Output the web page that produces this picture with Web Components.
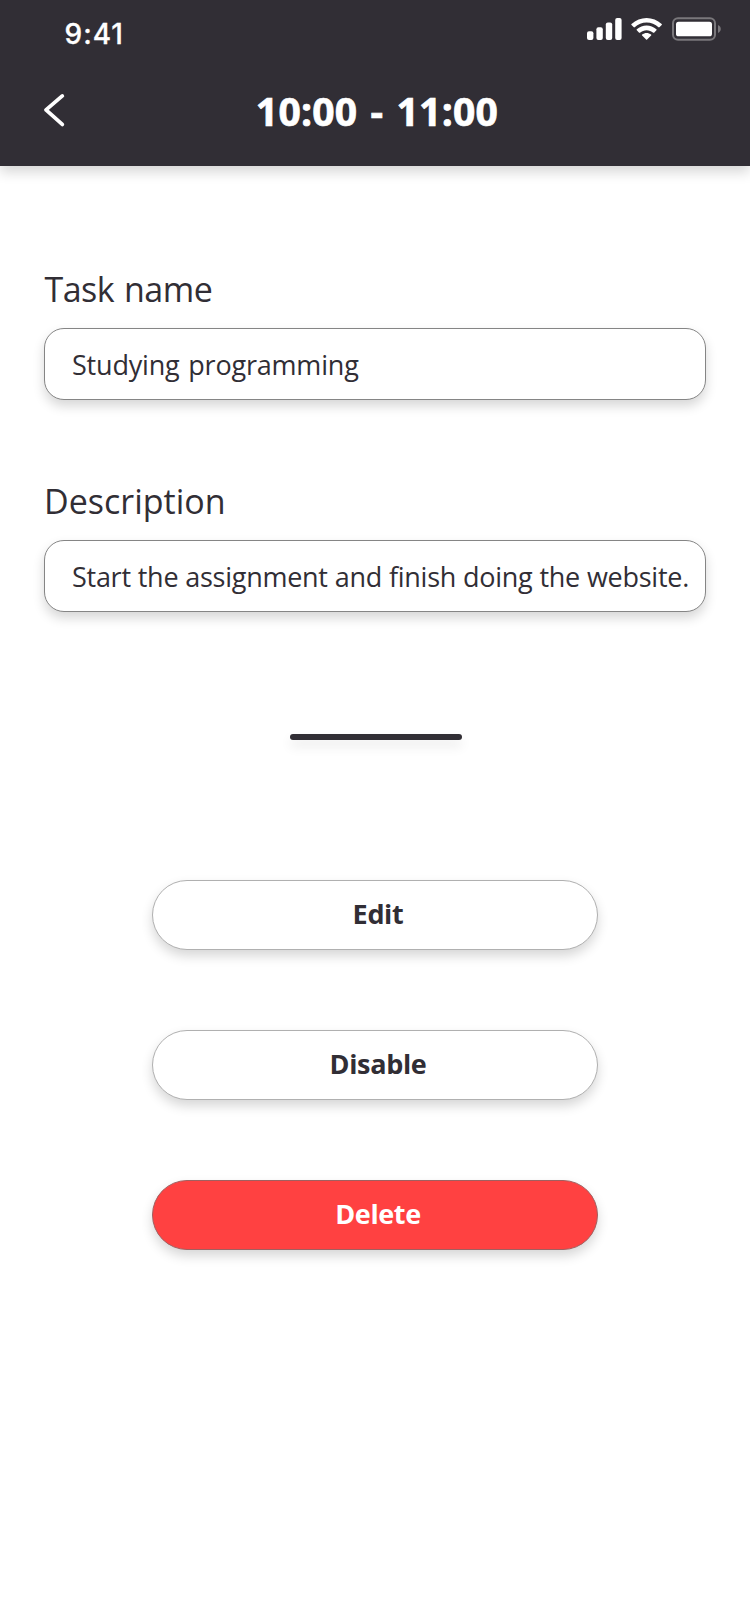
<!DOCTYPE html>
<html lang="en">
<head>
<meta charset="utf-8">
<title>Task details</title>
<style>
body { margin: 0; background: #fff; }
</style>
</head>
<body>
<task-screen></task-screen>
<script>
const define = (name, html) => customElements.define(name, class extends HTMLElement {
  constructor() {
    super();
    this.attachShadow({ mode: 'open' }).innerHTML = html;
  }
});

define('status-bar', `
<style>
:host { display: flex; justify-content: space-between; height: 62px; box-sizing: border-box; padding: 16px 29px 0 64.5px; color: #fff; }
time { font: 500 28px/36px Inter, "Liberation Sans", sans-serif; letter-spacing: 1px; -webkit-text-stroke: .3px #fff; }
svg { display: block; }
</style>
<time>9:41</time>
<svg width="135" height="26" viewBox="586 16 135 26" fill="#fff">
<rect x="587" y="31.3" width="6.4" height="8.7" rx="2"/><rect x="596.4" y="27.3" width="6.4" height="12.7" rx="2"/><rect x="605.8" y="22.6" width="6.4" height="17.4" rx="2"/><rect x="615.2" y="18" width="6.4" height="22" rx="2"/>
<path d="M646.6 22.5c4.4 0 8.7 1.7 11.9 4.8.3.2.6.2.9 0l2.3-2.4c.3-.3.3-.7 0-1-8.4-8-21.8-8-30.2 0-.3.3-.3.7 0 1l2.3 2.4c.3.2.6.2.9 0 3.2-3.1 7.5-4.8 11.9-4.8zM646.6 30.2c2.4 0 4.8.9 6.6 2.5.3.2.7.2.9 0l2.3-2.4c.3-.3.3-.7 0-1-5.5-5.1-14.1-5.1-19.6 0-.3.3-.3.7 0 1l2.3 2.4c.2.2.6.2.9 0 1.8-1.600 4.200-2.500 6.600-2.500zM651.1 35.5c.3-.3.3-.7 0-.9-2.600-2.200-6.400-2.200-9 0-.3.200-.3.600 0 .9l4 4.100c.3.3.7.3 1 0z"/>
<rect x="673" y="18.2" width="42" height="21.6" rx="5" fill="none" stroke="#79777b" stroke-width="2"/>
<rect x="676" y="21.7" width="36" height="14.6" rx="2.6"/>
<path d="M718 25v8c1.700-.7 2.800-2.300 2.800-4s-1.100-3.300-2.800-4z" fill="#79777b"/>
</svg>`);

define('app-header', `
<style>
:host { display: block; height: 166px; background: #312e35; box-shadow: 0 6px 12px rgba(0,0,0,.16); color: #fff; }
.bar { display: grid; grid-template-columns: 88px 1fr 84px; }
svg { display: block; margin: 30px 0 0 42px; }
h1 { margin: 21px 0 0; text-align: center; white-space: nowrap; font: 700 39px/56px "Open Sans", "Noto Sans", sans-serif; letter-spacing: .25px; word-spacing: 2.8px; -webkit-text-stroke: .7px #fff; }
</style>
<status-bar></status-bar>
<div class="bar">
<svg width="24" height="36" viewBox="42 92 24 36" fill="none" stroke="#fff" stroke-width="3.8" stroke-linecap="round" stroke-linejoin="round"><path d="M62.3 95.9 46 109.9 62.300 124.400"/></svg>
<h1><slot></slot></h1>
</div>`);

define('text-field', `
<style>
:host { display: block; font-family: "Open Sans", "Noto Sans", sans-serif; color: #312e35; }
.label { height: 63px; padding-left: var(--label-inset, 0); font-size: 34px; line-height: 48px; letter-spacing: var(--label-spacing, 0); word-spacing: var(--label-words, 0); white-space: nowrap; }
.box { height: 72px; box-sizing: border-box; border: 1px solid #858585; border-radius: 20px; background: #fff; box-shadow: 0 6px 12px rgba(0,0,0,.16); padding: 1px 0 0 27px; font-size: 27px; line-height: 70px; letter-spacing: var(--value-spacing, 0); word-spacing: var(--value-words, 0); white-space: nowrap; }
</style>
<div class="label"><slot name="label"></slot></div>
<div class="box"><slot></slot></div>`);

define('pill-button', `
<style>
:host { display: block; }
button { display: block; width: 446px; height: 70px; box-sizing: border-box; padding: 0 0 2px 6px; border: 1px solid var(--edge, #b0b0b0); border-radius: 35px; background: var(--fill, #fff); color: var(--ink, #312e35); box-shadow: 0 6px 12px rgba(0,0,0,.16); font: 700 27px/66px "Open Sans", "Noto Sans", sans-serif; letter-spacing: -.35px; }
:host([danger]) { --fill: #ff4141; --ink: #fff; --edge: #a06060; }
</style>
<button><slot></slot></button>`);

define('section-rule', `
<style>:host { display: block; width: 172px; height: 6px; border-radius: 3px; background: #312e35; box-shadow: 0 6px 12px rgba(0,0,0,.1); }</style>`);

define('task-screen', `
<style>
:host { display: flex; flex-direction: column; height: 1624px; background: #fff; }
.fields { display: flex; flex-direction: column; gap: 77px; padding: 99px 44px 0; }
.name { --label-inset: .5px; --label-spacing: -.5px; --label-words: 1.5px; --value-spacing: -.2px; --value-words: 2px; }
.description { --value-spacing: -.27px; --value-words: .25px; }
.more { display: flex; flex-direction: column; align-items: center; padding-top: 122px; }
section-rule { margin-left: 2px; }
.actions { display: flex; flex-direction: column; gap: 80px; padding-top: 140px; }
</style>
<app-header>10:00 - 11:00</app-header>
<div class="fields">
<text-field class="name"><span slot="label">Task name</span>Studying programming</text-field>
<text-field class="description"><span slot="label">Description</span>Start the assignment and finish doing the website.</text-field>
</div>
<div class="more">
<section-rule></section-rule>
<div class="actions">
<pill-button>Edit</pill-button>
<pill-button>Disable</pill-button>
<pill-button danger>Delete</pill-button>
</div>
</div>`);
</script>
</body>
</html>
